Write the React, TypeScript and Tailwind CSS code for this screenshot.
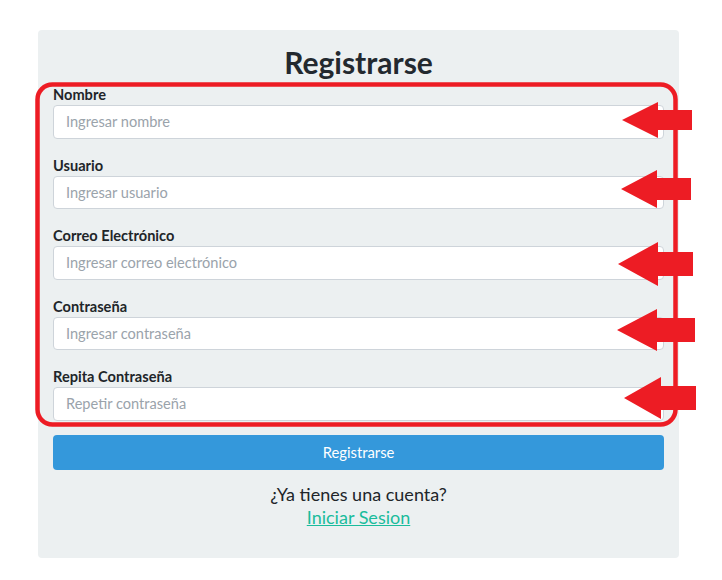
import React from "react";

const fields = [
  { label: "Nombre", placeholder: "Ingresar nombre", type: "text" },
  { label: "Usuario", placeholder: "Ingresar usuario", type: "text" },
  { label: "Correo Electrónico", placeholder: "Ingresar correo electrónico", type: "email" },
  { label: "Contraseña", placeholder: "Ingresar contraseña", type: "password" },
  { label: "Repita Contraseña", placeholder: "Repetir contraseña", type: "password" },
];

// tip x, center y, head base x, head half height, shaft half height, tail x
const arrows = [
  [622, 120, 658, 18, 10, 692],
  [621, 189, 657, 19, 11, 691],
  [618, 264, 658, 22, 12, 693],
  [617, 330, 657, 21, 12, 695],
  [624, 398, 661, 21, 12, 696],
];

function Annotations() {
  return (
    <svg className="pointer-events-none absolute left-0 top-0" width="722" height="580">
      <rect x="37.5" y="84.5" width="638" height="340" rx="15" fill="none" stroke="#ed1c24" strokeWidth="4.5" />
      {arrows.map(([tx, cy, bx, h, s, rx], i) => (
        <polygon
          key={i}
          fill="#ed1c24"
          points={`${tx},${cy} ${bx},${cy - h} ${bx},${cy - s} ${rx},${cy - s} ${rx},${cy + s} ${bx},${cy + s} ${bx},${cy + h}`}
        />
      ))}
    </svg>
  );
}

export default function App() {
  return (
    <div className="relative h-[580px] w-[722px] bg-white font-['Lato',sans-serif]">
      <div className="ml-[38px] pt-[30px]">
        <div className="w-[641px] rounded bg-[#ecf0f1] px-[15px] pb-[29px] pt-[14px]">
          <h2 className="text-center text-[30px] font-bold leading-[36px] text-[#23292f]">Registrarse</h2>
          <form className="mt-[4px] flex flex-col gap-[16px]" onSubmit={(e) => e.preventDefault()}>
            {fields.map((f) => (
              <div key={f.label} className="flex flex-col">
                <label className="text-[14.6px] font-bold leading-[21px] text-[#212529]">{f.label}</label>
                <input
                  type={f.type}
                  placeholder={f.placeholder}
                  className="h-[33.5px] rounded border border-[#ced4da] bg-white px-[12px] text-[14.6px] text-[#212529] outline-none placeholder:text-[#9aa3ab]"
                />
              </div>
            ))}
          </form>
          <button className="mt-[14px] h-[35px] w-full rounded bg-[#3498db] text-[14.8px] text-white">Registrarse</button>
          <p className="mt-[13px] text-center text-[18px] leading-[23px] text-[#212529]">¿Ya tienes una cuenta?</p>
          <p className="text-center text-[18px] leading-[23px]">
            <a href="#" className="text-[#1abc9c] underline">Iniciar Sesion</a>
          </p>
        </div>
      </div>
      <Annotations />
    </div>
  );
}
